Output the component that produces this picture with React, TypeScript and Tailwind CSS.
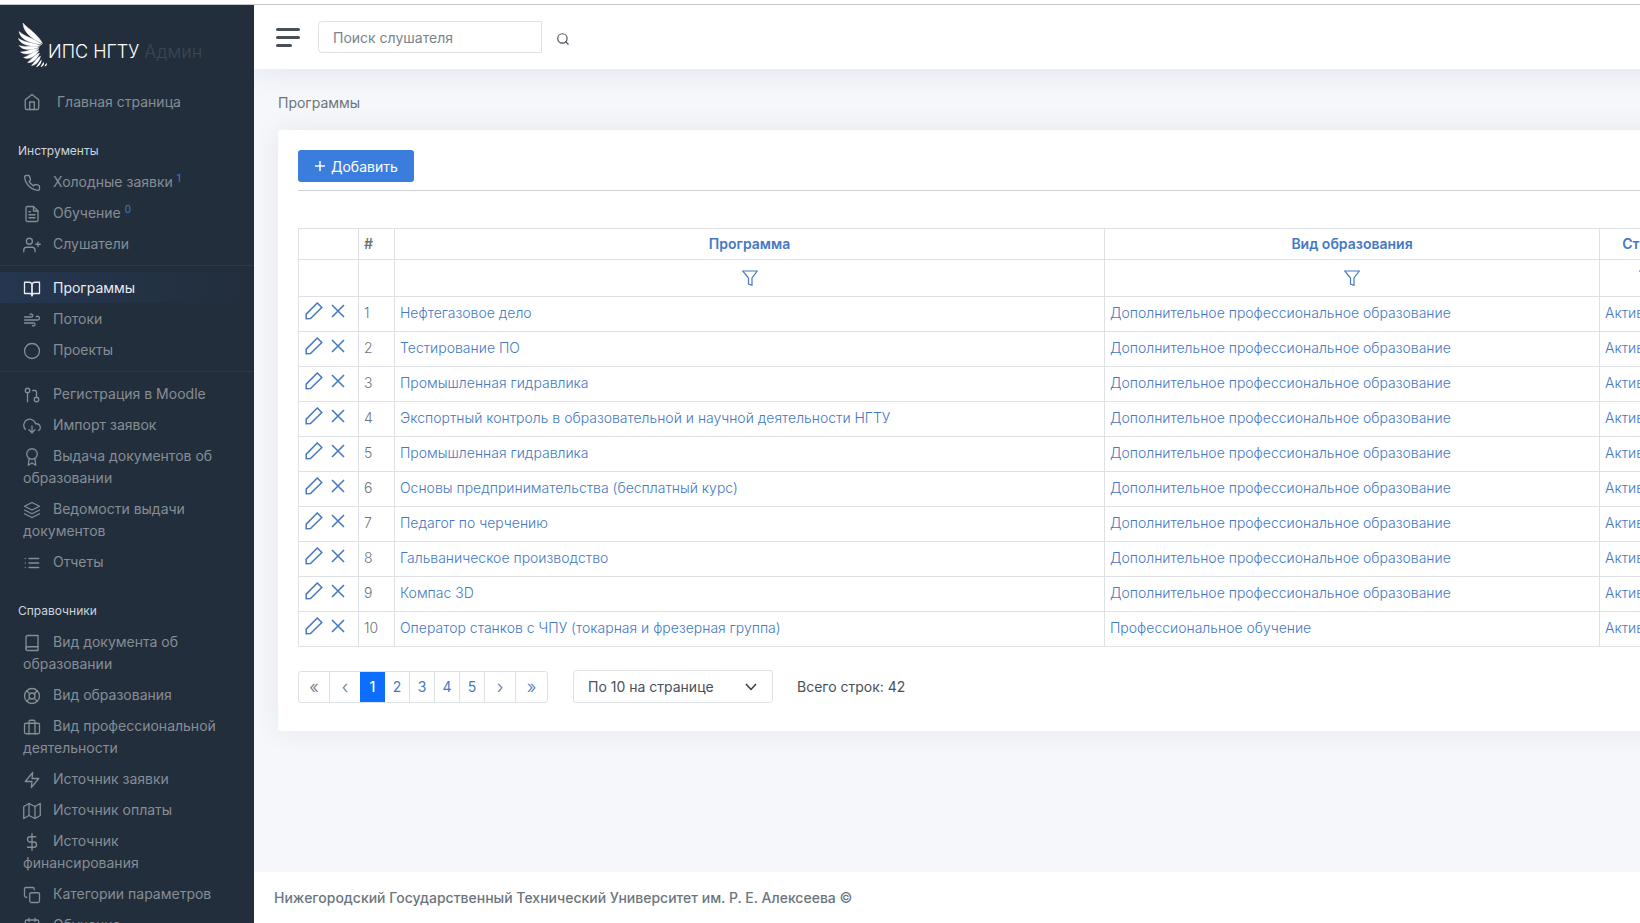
import type { ReactNode } from "react";
import type { IconType } from "react-icons";
import {
  FiAward,
  FiBook,
  FiBookOpen,
  FiBriefcase,
  FiCalendar,
  FiCircle,
  FiCopy,
  FiDollarSign,
  FiDownloadCloud,
  FiFileText,
  FiGitPullRequest,
  FiHome,
  FiLayers,
  FiLifeBuoy,
  FiList,
  FiMap,
  FiPhone,
  FiSearch,
  FiUserPlus,
  FiWind,
  FiZap,
} from "react-icons/fi";

type NavItem = { label: string; icon: IconType; count?: number; active?: boolean };

const requests: NavItem[] = [
  { label: "Холодные заявки", icon: FiPhone, count: 1 },
  { label: "Обучение", icon: FiFileText, count: 0 },
  { label: "Слушатели", icon: FiUserPlus },
];

const programs: NavItem[] = [
  { label: "Программы", icon: FiBookOpen, active: true },
  { label: "Потоки", icon: FiWind },
  { label: "Проекты", icon: FiCircle },
];

const documents: NavItem[] = [
  { label: "Регистрация в Moodle", icon: FiGitPullRequest },
  { label: "Импорт заявок", icon: FiDownloadCloud },
  { label: "Выдача документов об образовании", icon: FiAward },
  { label: "Ведомости выдачи документов", icon: FiLayers },
  { label: "Отчеты", icon: FiList },
];

const references: NavItem[] = [
  { label: "Вид документа об образовании", icon: FiBook },
  { label: "Вид образования", icon: FiLifeBuoy },
  { label: "Вид профессиональной деятельности", icon: FiBriefcase },
  { label: "Источник заявки", icon: FiZap },
  { label: "Источник оплаты", icon: FiMap },
  { label: "Источник финансирования", icon: FiDollarSign },
  { label: "Категории параметров", icon: FiCopy },
  { label: "Обучение", icon: FiCalendar },
];

const further = "Дополнительное профессиональное образование";

const rows: [string, string][] = [
  ["Нефтегазовое дело", further],
  ["Тестирование ПО", further],
  ["Промышленная гидравлика", further],
  ["Экспортный контроль в образовательной и научной деятельности НГТУ", further],
  ["Промышленная гидравлика", further],
  ["Основы предпринимательства (бесплатный курс)", further],
  ["Педагог по черчению", further],
  ["Гальваническое производство", further],
  ["Компас 3D", further],
  ["Оператор станков с ЧПУ (токарная и фрезерная группа)", "Профессиональное обучение"],
];

function WingLogo() {
  return (
    <svg viewBox="0 0 30 46" className="h-[46px] w-[30px] shrink-0 fill-white stroke-white" strokeWidth="0.400" aria-hidden="true">
      <path d="M5 0C10 6 20 11 24.500 20.500C16 16.500 5.500 11 5 0Z" />
      <path d="M1 8.500C7 14 17 15.500 24 21.500C14 20.500 2.500 17.500 1 8.500Z" />
      <path d="M0.300 15.500C6 19.500 15 19.500 22.500 22.500C13.500 24 3 22.500 0.300 15.500Z" />
      <path d="M1 22.500C7 24.500 14 22.500 21.500 23.800C15 27.500 5 28 1 22.500Z" />
      <path d="M2.500 29C8 29 14 25.500 21 25.500C16 30.500 8 33 2.500 29Z" />
      <path d="M5.500 34.500C10 33.500 15 28.500 21 27.500C18 33 11 37.500 5.500 34.500Z" />
      <path d="M9.500 39.500C13 37 17 31.500 21.500 30C20 35 15 40.500 9.500 39.500Z" />
      <path d="M13.500 42.500C16.500 39.500 18.500 35.500 22.500 33C22 37 18.500 42.500 13.500 42.500Z" />
      <path d="M18 44C20 41.500 21.500 38.500 23.500 36.500C24 39 22 43.500 18 44Z" strokeWidth="0" />
      <path d="M22.500 44C23.500 42 24.500 40.500 25.700 39C26.500 41 25.500 43.500 22.500 44Z" strokeWidth="0" />
      <path d="M26.500 43.500C27 42 27.500 41 28.700 40C29.300 41.500 28.700 43 26.500 43.500Z" strokeWidth="0" />
    </svg>
  );
}

function NavLink({ item }: { item: NavItem }) {
  const Icon = item.icon;
  return (
    <li>
      <a
        href="#"
        className={
          item.active
            ? "block bg-linear-to-r from-[#253650] to-[#222e3c] px-[23px] pt-[5px] pb-1 text-[#e9ecef]"
            : "block px-[23px] pt-[5px] pb-1 text-[#868d95]"
        }
      >
        <Icon className="mr-3 inline-block size-[18px] align-middle" strokeWidth={1.75} />
        {item.label}
        {item.count !== undefined && (
          <sup className="ml-1 text-[10px] text-[#3b7ddd]">{item.count}</sup>
        )}
      </a>
    </li>
  );
}

function NavList({ items }: { items: NavItem[] }) {
  return (
    <ul>
      {items.map((item) => (
        <NavLink key={item.label} item={item} />
      ))}
    </ul>
  );
}

function FilterIcon() {
  return (
    <svg viewBox="0 0 16 16" className="size-4" fill="none" stroke="currentColor" aria-hidden="true">
      <path d="M0.700 1H15.300L10 8V15.300L6.500 14V8Z" strokeWidth="1.200" />
    </svg>
  );
}

function PencilIcon() {
  return (
    <svg viewBox="0 0 18 18" className="size-[18px]" fill="none" stroke="currentColor" strokeWidth="1.500" aria-hidden="true">
      <path d="M12.300 1L16.800 5.500L5.500 16.600L1.200 16.800V12.100Z" />
    </svg>
  );
}

function CrossIcon() {
  return (
    <svg viewBox="0 0 14 14" className="size-[14px]" fill="none" stroke="currentColor" strokeWidth="1.600" aria-hidden="true">
      <path d="M1 1L13 13M13 1L1 13" />
    </svg>
  );
}

type PageItemProps = {
  children: ReactNode;
  arrow?: boolean;
  current?: boolean;
  muted?: boolean;
  label?: string;
};

function PageItem({ children, arrow, current, muted, label }: PageItemProps) {
  const size = arrow ? "w-[31px] text-lg font-light" : "w-[25px]";
  const tone = current
    ? "-ml-px bg-[#0d6efd] font-medium text-white"
    : muted
      ? "border-r border-[#dee2e6] text-[#6c757d]"
      : "border-r border-[#dee2e6] text-[#4579c4] last:border-r-0";
  return (
    <button type="button" aria-label={label} className={`flex h-full items-center justify-center ${size} ${tone}`}>
      {children}
    </button>
  );
}

const headCell = "border border-[#dee2e6] px-[5px] font-semibold";
const titleCell = "border border-[#dee2e6] px-[5px] pt-1 align-top font-semibold";
const bodyCell = "border border-[#dee2e6] px-[5px] pt-[5px] align-top";

export default function App() {
  return (
    <div className="flex h-screen flex-col overflow-hidden bg-white pt-1 font-['Inter',sans-serif] text-sm leading-[21px] text-[#495057]">
      <div className="flex min-h-0 flex-1 border-t border-[#c8c8c8] bg-[#f5f7fb]">
        <aside className="w-[254px] shrink-0 overflow-hidden bg-[#222e3c] leading-[22px]">
          <a href="#" className="flex items-end pt-[18px] pl-[18px] text-lg text-white">
            <WingLogo />
            <span className="pb-[3px] font-light">
              ИПС НГТУ <span className="text-[#3c4753]">Админ</span>
            </span>
          </a>
          <nav>
            <a href="#" className="mt-[17px] flex items-center gap-4 px-[23px] pt-[5px] pb-1 text-[#868d95]">
              <FiHome className="size-[18px]" strokeWidth={1.75} />
              Главная страница
            </a>
            <h2 className="px-[18px] pt-[26px] pb-[7px] text-xs text-[#ced4da]">Инструменты</h2>
            <NavList items={requests} />
            <hr className="my-[6px] border-[#2d3947]" />
            <NavList items={programs} />
            <hr className="my-[6px] border-[#2d3947]" />
            <NavList items={documents} />
            <h2 className="px-[18px] pt-[26px] pb-[7px] text-xs text-[#ced4da]">Справочники</h2>
            <NavList items={references} />
          </nav>
        </aside>

        <div className="flex min-w-0 flex-1 flex-col overflow-hidden">
          <header className="z-10 -mr-8 flex h-16 shrink-0 items-center bg-white px-[22px] shadow-[0_0_32px_rgba(41,48,66,0.1)]">
            <button type="button" aria-label="Меню" className="flex w-6 flex-col gap-[5px]">
              <span className="h-[3px] w-6 rounded-sm bg-[#495057]" />
              <span className="h-[3px] w-6 rounded-sm bg-[#495057]" />
              <span className="h-[3px] w-4 rounded-sm bg-[#495057]" />
            </button>
            <form className="ml-[18px] flex items-center" role="search">
              <input
                type="search"
                aria-label="Поиск слушателя"
                placeholder="Поиск слушателя"
                className="h-8 w-56 rounded-l-sm border border-[#dee2e6] px-[14px] placeholder:text-[#7b838a]"
              />
              <button type="button" aria-label="Найти" className="px-[14px] pt-4 pb-3">
                <FiSearch className="size-[14px]" strokeWidth={2} />
              </button>
            </form>
          </header>

          <main className="flex-1 px-6 pt-[23px]">
            <h1 className="text-[#6c757d]">Программы</h1>
            <section className="mt-[17px] w-max min-w-full rounded bg-white p-5 pb-7 shadow-[0_0_28px_rgba(41,48,66,0.08)]">
              <div className="border-b border-[#cfd1d4] pb-2">
                <button type="button" className="flex h-8 items-center gap-[5px] rounded-[3px] bg-[#3b7ddd] px-4 text-white">
                  <svg viewBox="0 0 12 12" className="size-3" fill="none" stroke="currentColor" strokeWidth="1.500" aria-hidden="true">
                    <path d="M6 1V11M1 6H11" />
                  </svg>
                  Добавить
                </button>
              </div>

              <table className="mt-[37px] w-[1395px] table-fixed border-collapse text-[#4579c4]">
                <colgroup>
                  <col className="w-[60px]" />
                  <col className="w-9" />
                  <col className="w-[710px]" />
                  <col className="w-[495px]" />
                  <col className="w-[94px]" />
                </colgroup>
                <thead>
                  <tr className="h-[31px]">
                    <th className={titleCell} />
                    <th className={`${titleCell} text-left text-[#6c757d]`}>#</th>
                    <th className={titleCell}>Программа</th>
                    <th className={titleCell}>Вид образования</th>
                    <th className={titleCell}>Статус</th>
                  </tr>
                  <tr className="h-[37px]">
                    <td className={headCell} />
                    <td className={headCell} />
                    {["Программа", "Вид образования", "Статус"].map((name) => (
                      <td key={name} className={headCell}>
                        <button type="button" aria-label={`Фильтр: ${name}`} className="mx-auto block">
                          <FilterIcon />
                        </button>
                      </td>
                    ))}
                  </tr>
                </thead>
                <tbody className="font-light">
                  {rows.map(([name, kind], index) => (
                    <tr key={index} className="h-[35px]">
                      <td className={bodyCell}>
                        <div className="flex items-center gap-2 pl-px">
                          <button type="button" aria-label="Изменить">
                            <PencilIcon />
                          </button>
                          <button type="button" aria-label="Удалить">
                            <CrossIcon />
                          </button>
                        </div>
                      </td>
                      <td className={`${bodyCell} text-[#6c757d]`}>{index + 1}</td>
                      <td className={bodyCell}>
                        <a href="#">{name}</a>
                      </td>
                      <td className={bodyCell}>
                        <a href="#">{kind}</a>
                      </td>
                      <td className={bodyCell}>
                        <a href="#">Активна</a>
                      </td>
                    </tr>
                  ))}
                </tbody>
              </table>

              <div className="mt-[23px] flex items-center">
                <nav aria-label="Страницы" className="flex h-8 overflow-hidden rounded-[3px] border border-[#dee2e6]">
                  <PageItem arrow muted label="Первая">«</PageItem>
                  <PageItem arrow muted label="Предыдущая">‹</PageItem>
                  <PageItem current>1</PageItem>
                  <PageItem>2</PageItem>
                  <PageItem>3</PageItem>
                  <PageItem>4</PageItem>
                  <PageItem>5</PageItem>
                  <PageItem arrow label="Следующая">›</PageItem>
                  <PageItem arrow label="Последняя">»</PageItem>
                </nav>
                <div className="relative ml-[25px]">
                  <select aria-label="Строк на странице" className="h-[33px] w-[200px] appearance-none rounded-[3px] border border-[#dee2e6] bg-white px-[14px]">
                    <option>По 10 на странице</option>
                  </select>
                  <svg viewBox="0 0 12 12" className="pointer-events-none absolute top-[11px] right-4 size-3" fill="none" stroke="#343a40" strokeWidth="1.500" aria-hidden="true">
                    <path d="M1 3L6 8.500L11 3" />
                  </svg>
                </div>
                <span className="ml-6">Всего строк: 42</span>
              </div>
            </section>
          </main>

          <footer className="shrink-0 bg-white px-5 py-[15px] font-medium text-[#6c757d]">
            Нижегородский Государственный Технический Университет им. Р. Е. Алексеева ©
          </footer>
        </div>
      </div>
    </div>
  );
}
